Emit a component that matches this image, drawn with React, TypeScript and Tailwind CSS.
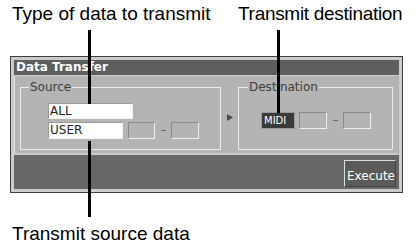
import React from "react";

const Box = ({ w, dark, children }: { w: string; dark?: boolean; children?: React.ReactNode }) => (
  <div className={`${w} h-[17px] border border-t-[#8c8c8c] border-l-[#8c8c8c] border-b-[#eeeeee] border-r-[#eeeeee] ${dark ? "bg-[#3b3b3b] text-white" : "bg-transparent"}`}>
    {children}
  </div>
);

export default function App() {
  return (
    <div className="relative w-[415px] h-[248px] bg-white overflow-hidden" style={{ fontFamily: '"Liberation Sans", Arial, sans-serif' }}>
      {/* top labels */}
      <div className="flex pt-[3px] pl-[12px] text-[19px] leading-[22px] text-black">
        <span className="w-[226px] whitespace-nowrap">Type of data to transmit</span>
        <span className="whitespace-nowrap tracking-[-0.3px]">Transmit destination</span>
      </div>

      {/* panel */}
      <div className="ml-[10px] mt-[31px] w-[393px] h-[137px] border border-[#3e3e3e] bg-[#cbcbcb] p-[3px] flex flex-col gap-[1px]" style={{ fontFamily: '"DejaVu Sans", sans-serif' }}>
        <div className="h-[15px] bg-[#5e5e5e] text-white font-bold text-[12px] leading-[15px] pl-[2px] whitespace-nowrap">
          Data Transfer
        </div>
        <div className="h-[77px] bg-[#b4b4b4] border-l border-l-[#e2e2e2] pt-[5px] pl-[5px] pr-[6px] flex items-start">
          {/* Source group */}
          <fieldset className="w-[201px] h-[69px] border border-[#ececec]">
            <legend className="ml-[8px] px-[1px] text-[12px] leading-[12px] text-[#3e3e3e]">Source</legend>
            <div className="pl-[27px] pt-[10px] flex flex-col gap-[3px] text-[12px] leading-[15px] text-[#222]">
              <div className="w-[85px] h-[16px] bg-white border border-t-[#9a9a9a] border-l-[#9a9a9a] border-b-[#f4f4f4] border-r-[#f4f4f4] pl-[1px] leading-[14px]">ALL</div>
              <div className="flex items-center">
                <div className="w-[75px] h-[17px] bg-white border border-t-[#9a9a9a] border-l-[#9a9a9a] border-b-[#f4f4f4] border-r-[#f4f4f4] pl-[1px] leading-[15px]">USER</div>
                <div className="ml-[5px]"><Box w="w-[27px]" /></div>
                <div className="w-[16px] flex justify-center"><div className="w-[5px] h-[1px] bg-[#6e6e6e]" /></div>
                <Box w="w-[28px]" />
              </div>
            </div>
          </fieldset>
          {/* arrow */}
          <div className="w-[17px] h-[69px] flex items-center justify-center pt-[3px]">
            <svg width="6" height="7" viewBox="0 0 6 7"><polygon points="0,0 6,3.5 0,7" fill="#4a4a4a" /></svg>
          </div>
          {/* Destination group */}
          <fieldset className="w-[155px] h-[69px] border border-[#ececec]">
            <legend className="ml-[9px] px-[1px] text-[12px] leading-[12px] text-[#3e3e3e]">Destination</legend>
            <div className="pl-[22px] pt-[19px] flex items-center">
              <div className="w-[34px] h-[17px] bg-[#3a3a3a] border border-[#9a9a9a] text-white text-[10px] leading-[15px] pl-[2px]">MIDI</div>
              <div className="ml-[4px]"><Box w="w-[28px]" /></div>
              <div className="w-[16px] flex justify-center"><div className="w-[5px] h-[1px] bg-[#6e6e6e]" /></div>
              <Box w="w-[28px]" />
            </div>
          </fieldset>
        </div>
        <div className="mt-[1px] h-[34px] bg-[#676767] flex justify-end items-start pt-[5px] pr-[3px]">
          <div className="w-[52px] h-[27px] bg-[#5a5a5a] border border-t-[#dcdcdc] border-l-[#dcdcdc] border-r-[#444] border-b-[#444] text-white text-[12px] leading-[14px] pt-[8px] pl-[2px] whitespace-nowrap">
            Execute
          </div>
        </div>
      </div>

      {/* bottom label */}
      <div className="mt-[30px] pl-[12px] text-[19px] leading-[22px] text-black whitespace-nowrap">Transmit source data</div>

      {/* leader lines */}
      <div className="absolute left-[88px] top-[30px] w-[3px] h-[74px] bg-black" />
      <div className="absolute left-[88px] top-[141px] w-[3px] h-[76px] bg-black" />
      <div className="absolute left-[277px] top-[30px] w-[3px] h-[83px] bg-black" />
    </div>
  );
}
